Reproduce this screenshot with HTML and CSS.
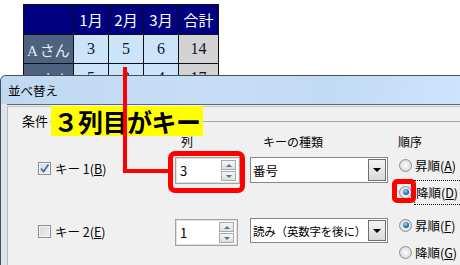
FILE: index.html
```html
<!DOCTYPE html>
<html lang="ja">
<head>
<meta charset="utf-8">
<link rel="stylesheet" href="styles.css">
</head>
<body>
<table class="sheet">
  <colgroup><col class="c-name"><col class="c-m"><col class="c-m"><col class="c-m"><col class="c-sum"></colgroup>
  <tr class="head"><td></td><td>1月</td><td>2月</td><td>3月</td><td>合計</td></tr>
  <tr class="data"><td class="name">A さん</td><td>3</td><td>5</td><td>6</td><td class="sum">14</td></tr>
  <tr class="data"><td class="name">B さん</td><td>5</td><td>2</td><td>4</td><td class="sum">17</td></tr>
</table>

<div class="dialog">
  <div class="titlebar">並べ替え</div>
  <div class="client">
    <div class="panel">
      <div class="group-head"><span class="group-label">条件</span><span class="group-line"></span></div>
      <div class="grid">
        <div class="hdr"></div>
        <div class="hdr hdr-col">列</div>
        <div class="hdr hdr-kind">キーの種類</div>
        <div class="hdr">順序</div>

        <div class="keycell k1">
          <span class="check on"><svg width="11" height="11" viewBox="0 0 11 11"><path d="M2 5.5 L4.5 8.5 L9.5 1.5" fill="none" stroke="#4a63a8" stroke-width="1.7"/></svg></span>
          <span>キー 1(<u>B</u>)</span>
        </div>
        <div class="spin s1"><span class="val">3</span><span class="spinbtns"><span class="sb up"></span><span class="sb down"></span></span></div>
        <div class="combo c1"><span class="ctext">番号</span><span class="dd"></span></div>
        <div class="radios r1">
          <div class="ritem"><span class="radio"></span><span>昇順(<u>A</u>)</span></div>
          <div class="ritem"><span class="radio on"></span><span class="focus">降順(<u>D</u>)</span></div>
        </div>

        <div class="keycell k2">
          <span class="check"></span>
          <span>キー 2(<u>E</u>)</span>
        </div>
        <div class="spin s2"><span class="val">1</span><span class="spinbtns"><span class="sb up"></span><span class="sb down"></span></span></div>
        <div class="combo c2"><span class="ctext">読み（英数字を後に）</span><span class="dd"></span></div>
        <div class="radios r2">
          <div class="ritem"><span class="radio on"></span><span>昇順(<u>F</u>)</span></div>
          <div class="ritem"><span class="radio"></span><span>降順(<u>G</u>)</span></div>
        </div>
      </div>
    </div>
  </div>
</div>

<div class="callout">３列目がキー</div>
<div class="red red-v"></div>
<div class="red red-h"></div>
<div class="redbox redbox-spin"></div>
<div class="redbox redbox-radio"></div>
</body>
</html>
```

FILE: styles.css
```css
html, body {
  margin: 0;
  padding: 0;
}
body {
  width: 460px;
  height: 265px;
  overflow: hidden;
  position: relative;
  background: #ffffff;
  font-family: "Noto Sans CJK JP", sans-serif;
  color: #000;
}

/* spreadsheet */
.sheet {
  border-collapse: collapse;
  table-layout: fixed;
  margin: 4px 0 0 23px;
  width: 196px;
}
.c-name { width: 50px; }
.c-m { width: 35px; }
.c-sum { width: 40px; }
.sheet td {
  border: 1px solid #101018;
  padding: 0;
  text-align: center;
}
.head td {
  height: 29px;
  background: #000080;
  color: #ffffff;
  font-size: 15px;
  font-family: "Noto Sans CJK JP", sans-serif;
}
.data td {
  height: 28px;
  background: #cce4fa;
  color: #141428;
  font-size: 16px;
  font-family: "Liberation Serif", "Noto Sans CJK JP", serif;
}
.data td.name {
  background: #4c627f;
  color: #e2e9f2;
  font-size: 15px;
  word-spacing: -1px;
}
.data td.sum {
  background: #d3d3d3;
}

/* dialog window */
.dialog {
  position: absolute;
  left: 0;
  top: 75px;
  width: 470px;
  height: 190px;
  background: #dce4ec;
  border: 1px solid #444e58;
  border-bottom: none;
  border-radius: 6px 6px 0 0;
  box-sizing: border-box;
  font-size: 12px;
  overflow: hidden;
}
.titlebar {
  height: 28px;
  display: flex;
  align-items: center;
  padding-left: 7px;
  font-size: 12.5px;
  background: linear-gradient(100deg, #c0d8f1 0%, #c6ddf5 45%, #c2dbf4 70%, #cde5fc 100%);
  border-radius: 5px 5px 0 0;
}
.client {
  margin-left: 6px;
  height: 160px;
  background: #f0f0f0;
  border-top: 1px solid #5d6874;
  padding-top: 1px;
}
.panel {
  height: 159px;
  box-sizing: border-box;
  border-top: 1px solid #c4c4c4;
  border-left: 1px solid #b8b8b8;
  padding-top: 6px;
}
.group-head {
  display: flex;
  align-items: center;
  height: 16px;
}
.group-label {
  margin-left: 14px;
  padding-right: 2px;
  font-size: 13px;
  line-height: 16px;
}
.group-line {
  flex: 1;
  height: 1px;
  background: #a4a4a4;
}

.grid {
  display: grid;
  grid-template-columns: 167px 75px 148px 1fr;
  grid-template-rows: 28px 61px 47px;
}
.hdr {
  padding-top: 4px;
  line-height: 18px;
  font-size: 12px;
}
.hdr-col { padding-left: 6px; }
.hdr-kind { padding-left: 13px; }

.keycell {
  display: flex;
  align-items: center;
  gap: 4px;
  padding-left: 30px;
  font-size: 12.5px;
}
.k1 { height: 22px; }
.k2 { height: 26px; }
.check {
  width: 13px;
  height: 13px;
  box-sizing: border-box;
  border: 1px solid #8e8f8f;
  background: linear-gradient(135deg, #d6d6d6, #f2f2f2);
  box-shadow: inset 0 0 0 1px #f6f6f6;
  display: flex;
  align-items: center;
  justify-content: center;
}
.check.on { background: linear-gradient(135deg, #dadcdf, #f0f0f0); }

.spin {
  width: 65px;
  height: 27px;
  box-sizing: border-box;
  border: 1px solid #a2a2a2;
  box-shadow: inset 0 0 0 1px #e2e2e2;
  background: #ffffff;
  display: flex;
  align-items: center;
}
.s2 { margin-top: 1px; width: 63px; }
.val {
  flex: 1;
  padding-left: 4px;
  font-size: 13px;
}
.spinbtns {
  display: flex;
  flex-direction: column;
  gap: 1px;
  margin-right: 3px;
}
.sb {
  width: 15px;
  height: 10px;
  box-sizing: border-box;
  border: 1px solid #a9a9a9;
  background: linear-gradient(#f6f6f6, #dedede);
  display: flex;
  align-items: center;
  justify-content: center;
}
.sb.up::after {
  content: "";
  border-left: 3px solid transparent;
  border-right: 3px solid transparent;
  border-bottom: 3px solid #5672ac;
}
.sb.down::after {
  content: "";
  border-left: 3px solid transparent;
  border-right: 3px solid transparent;
  border-top: 3px solid #5672ac;
}

.combo {
  width: 138px;
  height: 26px;
  box-sizing: border-box;
  border: 1px solid #848790;
  background: #ffffff;
  display: flex;
  align-items: center;
}
.c2 { height: 25px; }
.ctext {
  flex: 1;
  min-width: 0;
  padding-left: 2px;
  font-size: 12.5px;
  white-space: nowrap;
}
.c2 .ctext {
  font-size: 11.5px;
  letter-spacing: -0.2px;
}
.dd {
  flex: none;
  width: 18px;
  align-self: stretch;
  margin: 1px 1px 1px 0;
  box-sizing: border-box;
  border: 1px solid #707070;
  background: linear-gradient(#f4f4f4, #d9d9d9);
  display: flex;
  align-items: center;
  justify-content: center;
}
.dd::after {
  content: "";
  border-left: 4px solid transparent;
  border-right: 4px solid transparent;
  border-top: 4px solid #000;
}

.radios {
  display: flex;
  flex-direction: column;
  gap: 11px;
}
.r2 { margin-top: -1px; }
.ritem {
  display: flex;
  align-items: center;
  gap: 3px;
  height: 16px;
  padding-left: 1px;
  font-size: 12.5px;
}
.radio {
  width: 13px;
  height: 13px;
  box-sizing: border-box;
  border-radius: 50%;
  border: 1px solid #8e8f8f;
  background: radial-gradient(circle at 50% 50%, #ffffff 0, #e8e8e8 45%, #cfcfcf 100%);
  display: flex;
  align-items: center;
  justify-content: center;
}
.radio.on::after {
  content: "";
  width: 6px;
  height: 6px;
  border-radius: 50%;
  background: radial-gradient(circle at 40% 35%, #9ad6ff 0, #1f74c0 55%, #0b3f74 100%);
}
.focus {
  outline: 1px dotted #000;
  padding: 2px 3px 2px 1px;
}

/* annotations */
.callout {
  position: absolute;
  left: 51px;
  top: 106px;
  width: 152px;
  height: 30px;
  background: #ffff00;
  font-family: "Noto Sans CJK JP", sans-serif;
  font-weight: bold;
  font-size: 25px;
  line-height: 30px;
  text-align: center;
  white-space: nowrap;
  letter-spacing: -0.5px;
}
.red {
  position: absolute;
  background: #ff0000;
}
.red-v { left: 123px; top: 67px; width: 4px; height: 106px; }
.red-h { left: 123px; top: 169px; width: 47px; height: 4px; }
.redbox {
  position: absolute;
  box-sizing: border-box;
  border: 5px solid #ff0000;
}
.redbox-spin { left: 168px; top: 151px; width: 77px; height: 42px; border-radius: 7px; }
.redbox-radio { left: 392px; top: 179px; width: 24px; height: 24px; border-radius: 5px; }
```
